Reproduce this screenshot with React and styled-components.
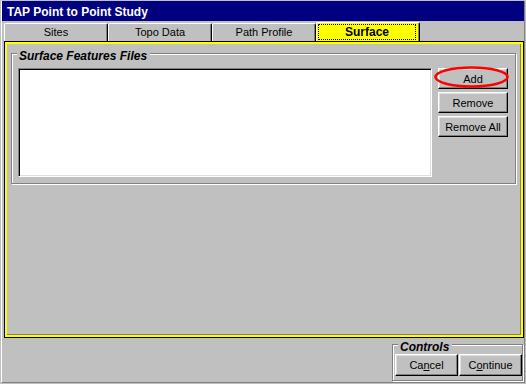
import React from 'react'
import styled, { createGlobalStyle } from 'styled-components'

const GlobalStyle = createGlobalStyle`
  html, body {
    margin: 0;
    padding: 0;
    background: #c0c0c0;
  }
  * {
    box-sizing: border-box;
  }
`;

function App() {
  return (
    <Window>
      <GlobalStyle />
      <Frame>
        <TitleBar>TAP Point to Point Study</TitleBar>

        <Tabs>
          <Tab>Sites</Tab>
          <Tab>Topo Data</Tab>
          <Tab>Path Profile</Tab>
          <Tab $active>
            <TabLabel $active>Surface</TabLabel>
          </Tab>
        </Tabs>

        <Panel>
          <FilesGroup>
            <Legend>Surface Features Files</Legend>
            <ListBox />
            <ButtonColumn>
              <Button>Add</Button>
              <Button>Remove</Button>
              <Button>Remove All</Button>
              <Highlight width="75" height="22" viewBox="0 0 75 22">
                <ellipse cx="37.5" cy="11" rx="36" ry="9.5" fill="none" stroke="#ff0000" strokeWidth="2.5" />
              </Highlight>
            </ButtonColumn>
          </FilesGroup>
        </Panel>

        <Footer>
          <ControlsGroup>
            <Legend>Controls</Legend>
            <Button $wide>Ca<u>n</u>cel</Button>
            <Button $wide>C<u>o</u>ntinue</Button>
          </ControlsGroup>
        </Footer>
      </Frame>
    </Window>
  )
}

export default App

const Window = styled.div`
  width: 526px;
  height: 384px;
  padding: 1px 1px 1px 1px;
  background: #c0c0c0;
  font-family: "Liberation Sans", Arial, sans-serif;
  color: #000;
`;

const Frame = styled.div`
  display: flex;
  flex-direction: column;
  width: 524px;
  height: 382px;
  border-left: 1px solid #fff;
  border-right: 1px solid #808080;
  border-bottom: 1px solid #808080;
`;

const TitleBar = styled.div`
  height: 20px;
  padding: 3px 0 0 5px;
  background: #000080;
  color: #fff;
  font-size: 12px;
  font-weight: bold;
  line-height: 17px;
  white-space: nowrap;
`;

const Tabs = styled.div`
  display: flex;
  align-items: flex-end;
  height: 19px;
  margin-top: 1px;
  padding-left: 2px;
`;

const Tab = styled.div`
  width: 104px;
  height: ${p => (p.$active ? 19 : 18)}px;
  padding: ${p => (p.$active ? '1px 3px 1px 1px' : '0')};
  background: ${p => (p.$active ? '#ffff00' : '#c0c0c0')};
  border-top: 1px solid #fff;
  border-left: 1px solid #fff;
  border-right: 1px solid #000;
  border-top-left-radius: 2px;
  border-top-right-radius: 2px;
  box-shadow: inset -1px 0 0 #808080;
  font-size: 11px;
  line-height: 17px;
  text-align: center;
  white-space: nowrap;
`;

const TabLabel = styled.span`
  display: block;
  height: 100%;
  border: 1px dotted #000040;
  font-size: 12px;
  font-weight: bold;
  line-height: 14px;
`;

const Panel = styled.div`
  width: 520px;
  height: 297px;
  margin-left: 2px;
  border: 1px solid #000;
  box-shadow: inset 0 0 0 2px #ffff00, inset -3px -3px 0 #808080;
`;

const GroupBox = styled.div`
  position: relative;
  display: flex;
  border: 1px solid #808080;
  box-shadow: inset 1px 1px 0 #fff, 1px 1px 0 #fff;
`;

const FilesGroup = styled(GroupBox)`
  width: 505px;
  margin: 11px 7px 0 6px;
  padding: 14px 7px 6px 6px;
  gap: 6px;
`;

const Legend = styled.span`
  position: absolute;
  top: -4px;
  left: 5px;
  padding: 0 3px 0 2px;
  background: #c0c0c0;
  font-size: 12px;
  font-style: italic;
  font-weight: bold;
  line-height: 13px;
  white-space: nowrap;
`;

const ListBox = styled.div`
  width: 414px;
  height: 109px;
  background: #fff;
  border: 1px solid;
  border-color: #808080 #fff #fff #808080;
  box-shadow: inset 1px 1px 0 #000, inset -1px -1px 0 #dfdfdf;
`;

const ButtonColumn = styled.div`
  position: relative;
  display: flex;
  flex-direction: column;
  gap: 3px;
  width: 70px;
`;

const Button = styled.button`
  width: ${p => (p.$wide ? 63 : 70)}px;
  height: ${p => (p.$wide ? 22 : 21)}px;
  padding: 0;
  background: #c0c0c0;
  border: 1px solid;
  border-color: #fff #000 #000 #fff;
  box-shadow: inset -1px -1px 0 #808080, inset 1px 1px 0 #dfdfdf;
  font-family: "Liberation Sans", Arial, sans-serif;
  font-size: 11px;
  color: #000;
  text-align: center;

  u {
    text-underline-offset: 1px;
  }
`;

const Highlight = styled.svg`
  position: absolute;
  left: -4px;
  top: -2px;
  pointer-events: none;
`;

const Footer = styled.div`
  display: flex;
  justify-content: flex-end;
  margin-top: 6px;
  padding-right: 1px;
`;

const ControlsGroup = styled(GroupBox)`
  width: 131px;
  padding: 9px 0 4px 2px;
  gap: 1px;
`;
